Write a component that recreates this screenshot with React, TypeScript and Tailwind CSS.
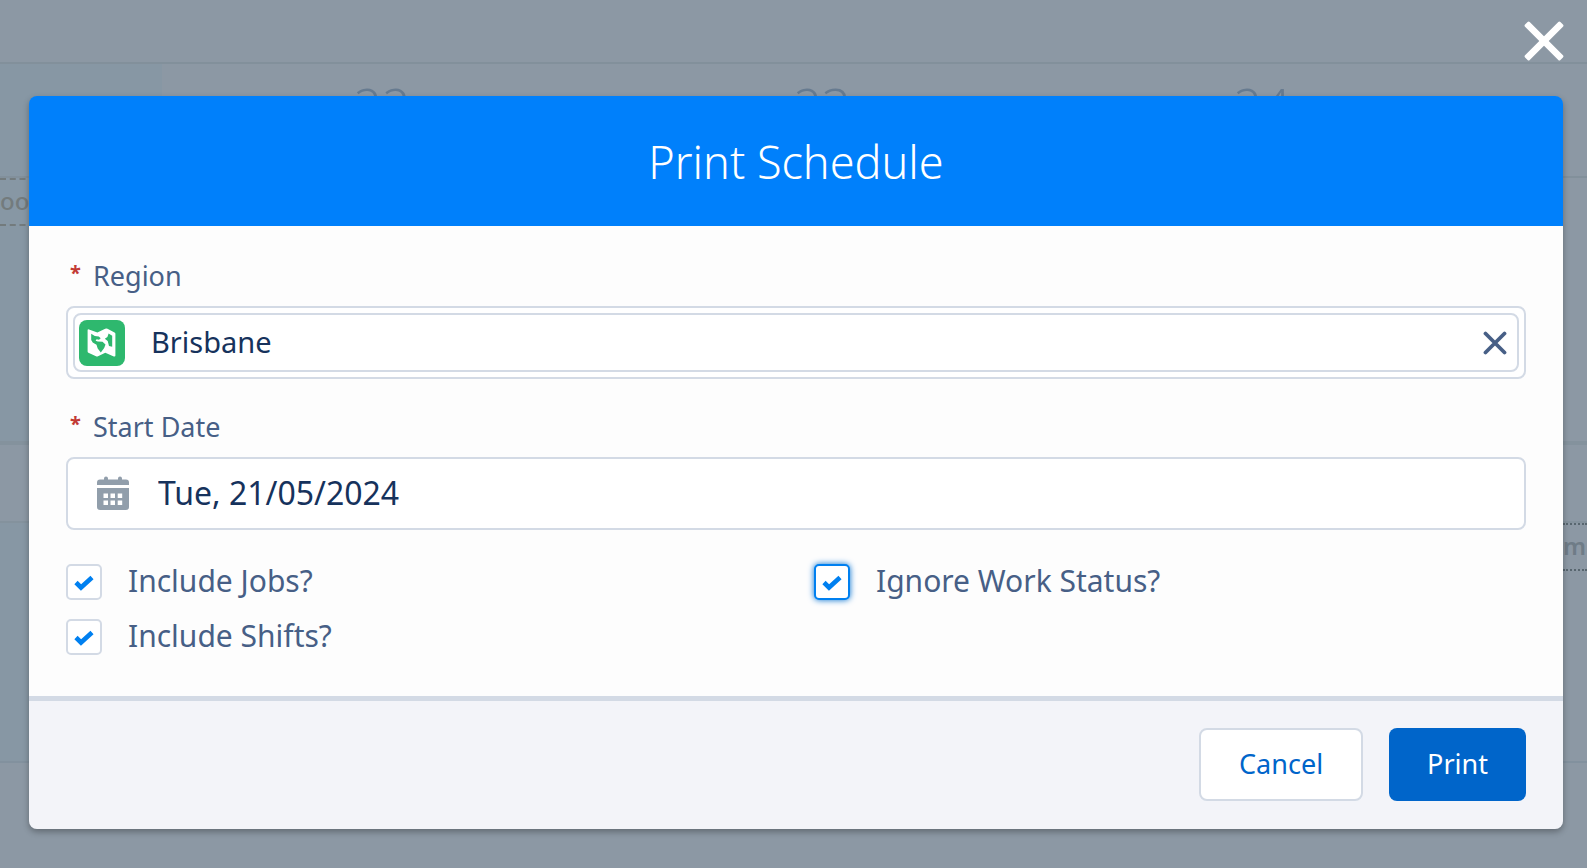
import { useState } from "react";

function CloseIcon() {
  return (
    <svg viewBox="0 0 40 40" className="size-10" fill="currentColor" aria-hidden="true">
      <rect x="-5" y="16.700" width="50" height="6.600" rx="1.5" transform="rotate(45 20 20)" />
      <rect x="-5" y="16.700" width="50" height="6.600" rx="1.5" transform="rotate(-45 20 20)" />
    </svg>
  );
}

function RemoveIcon() {
  return (
    <svg viewBox="0 0 24 24" className="size-6" fill="none" stroke="currentColor" strokeWidth="3.8" strokeLinecap="round" aria-hidden="true">
      <path d="M2.500 2.500L21.500 21.500M21.500 2.500L2.500 21.500" />
    </svg>
  );
}

function TerritoryIcon() {
  return (
    <svg viewBox="0 0 46 46" className="size-[46px] shrink-0 rounded-lg bg-[#2eb86e]" aria-hidden="true">
      <path
        d="M10 9.400Q8.600 8.800 8.600 10.200V31.500Q8.600 32.300 9.400 32.700L17 36.300Q18 36.800 19 36.300L26.300 32.800L34.800 36.400Q36.400 37 36.400 35.500V13.800Q36.400 12.900 35.500 12.400L28.500 8.800Q27.300 8.200 26.200 8.800L18.400 12.600Z"
        fill="#fff"
      />
      <path
        d="M12.200 13.800L15.800 16.100L19.800 16.400L21.700 18.200L20 19.700L17.600 19.300L16.600 20.800L18.800 21.500L23.500 21.800L26.500 24.500L25.200 28L21.800 32.400L18.700 28.600L17.500 24.800L13.700 22.600L12.200 20Z"
        fill="#2eb86e"
      />
      <path d="M29.600 13.400L33.200 15.800V26.800L30 25.900L28.700 21L25.800 18.800L28.400 17Z" fill="#2eb86e" />
    </svg>
  );
}

function CalendarIcon() {
  return (
    <svg viewBox="0 0 32 34" className="mb-[2px] h-[34px] w-8 shrink-0" fill="#919eab" aria-hidden="true">
      <path d="M7 2.500a2 2 0 0 1 4 0V3.500H21V2.500a2 2 0 0 1 4 0V3.500H29a3 3 0 0 1 3 3V9H0V6.500a3 3 0 0 1 3-3H7Z" />
      <path
        fillRule="evenodd"
        d="M0 12H32V31a3 3 0 0 1-3 3H3a3 3 0 0 1-3-3ZM6.500 17.500v4.500H11v-4.500ZM13.500 17.500v4.500H18v-4.500ZM20.700 17.500v4.500h4.500v-4.500ZM6.500 24.500V29H11v-4.500ZM13.500 24.500V29H18v-4.500ZM20.700 24.500V29h4.500v-4.500Z"
      />
    </svg>
  );
}

function FieldLabel({ htmlFor, text }: { htmlFor: string; text: string }) {
  return (
    <label htmlFor={htmlFor} className="flex pl-1 text-[27px] leading-9 text-[#475f86]">
      <span className="w-[23px] text-xl leading-[30px] font-bold text-[#c23934]" aria-hidden="true">
        *
      </span>
      {text}
    </label>
  );
}

function CheckField({ id, label, focused }: { id: string; label: string; focused?: boolean }) {
  return (
    <div className="flex items-start gap-[26px]">
      <span className="grid size-9 shrink-0 place-items-center">
        <input
          id={id}
          type="checkbox"
          defaultChecked
          autoFocus={focused}
          className="peer col-start-1 row-start-1 size-full appearance-none rounded-[5px] border-2 border-[#d3dae5] bg-white outline-none focus:border-[#0080f0] focus:shadow-[0_0_6px_#0070d2]"
        />
        <svg viewBox="0 0 20 16" className="pointer-events-none invisible col-start-1 row-start-1 mt-[2px] h-4 w-5 peer-checked:visible" fill="none" stroke="#0080f0" strokeWidth="4.6" aria-hidden="true">
          <path d="M2 7.500L7 12.500L18 2.500" />
        </svg>
      </span>
      <label htmlFor={id} className="text-[30px] leading-[34px] text-[#475f86]">
        {label}
      </label>
    </div>
  );
}

function ScheduleBackdrop() {
  return (
    <div className="col-start-1 row-start-1 flex min-w-0 flex-col overflow-hidden bg-[#8c98a4]" aria-hidden="true">
      <div className="h-[62px] shrink-0" />
      <div className="flex h-[116px] shrink-0 border-y-2 border-[#82909b]">
        <div className="w-[162px] shrink-0 bg-[#8797a4]" />
        {["22", "23", "24"].map((day) => (
          <div key={day} className="w-[440px] shrink-0 pt-[7px] text-center text-[50px] leading-[70px] font-light text-[#677b90]">
            {day}
          </div>
        ))}
      </div>
      <div className="flex h-[263px] shrink-0">
        <div className="w-[162px] bg-[#8797a4]">
          <div className="h-12 border-y-2 border-dashed border-[#737b7d] text-2xl leading-[42px] font-medium text-[#737b7d]">oo</div>
        </div>
      </div>
      <div className="h-[82px] shrink-0 border-y-4 border-b-2 border-[#84929d]" />
      <div className="flex h-60 shrink-0 border-b-2 border-[#82919e]">
        <div className="w-[162px] bg-[#8797a4]" />
        <div className="ml-auto w-6">
          <div className="h-12 border-y-2 border-dotted border-[#58666f] text-2xl leading-[42px] font-semibold text-[#6f7c87]">m</div>
        </div>
      </div>
    </div>
  );
}

export default function App() {
  const [region, setRegion] = useState("Brisbane");
  const [date, setDate] = useState("Tue, 21/05/2024");

  return (
    <div className="grid min-h-screen grid-cols-1 font-['Noto_Sans',sans-serif]">
      <ScheduleBackdrop />
      <div className="z-10 col-start-1 row-start-1 flex flex-col pr-6 pl-[29px]">
        <div className="flex h-24 shrink-0 items-start justify-end pt-[21px]">
          <button type="button" aria-label="Close" className="-mr-px text-white">
            <CloseIcon />
          </button>
        </div>
        <section role="dialog" aria-labelledby="print-title" className="rounded-lg shadow-[0_3px_6px_rgba(0,0,0,0.3)]">
          <header className="flex h-[130px] items-center justify-center rounded-t-lg bg-[#0080fb]">
            <h1 id="print-title" className="text-[45px] leading-none font-light text-white">
              Print Schedule
            </h1>
          </header>

          <div className="bg-[#fdfdfd] px-[37px] pt-8 pb-[41px]">
            <FieldLabel htmlFor="region" text="Region" />
            <div className="mt-3 h-[73px] rounded-lg border-2 border-[#d3dae5] bg-white p-[5px]">
              <div className="flex h-full items-center rounded-lg border-2 border-[#d3dae5] pr-[10px] pl-1">
                <TerritoryIcon />
                <input
                  id="region"
                  value={region}
                  onChange={(e) => setRegion(e.target.value)}
                  className="ml-[26px] min-w-0 flex-1 pb-[2px] text-[29px] leading-9 text-[#16325c] outline-none"
                />
                <button type="button" aria-label="Remove region" className="text-[#475f86]" onClick={() => setRegion("")}>
                  <RemoveIcon />
                </button>
              </div>
            </div>

            <div className="mt-[30px]">
              <FieldLabel htmlFor="start-date" text="Start Date" />
            </div>
            <div className="mt-3 flex h-[73px] items-center rounded-lg border-2 border-[#d3dae5] bg-white px-[29px]">
              <CalendarIcon />
              <input
                id="start-date"
                value={date}
                onChange={(e) => setDate(e.target.value)}
                className="ml-[29px] min-w-0 flex-1 pb-[2px] text-[32px] leading-9 text-[#16325c] outline-none"
              />
            </div>

            <div className="mt-[34px] grid grid-cols-2 gap-x-9 gap-y-[19px]">
              <CheckField id="include-jobs" label="Include Jobs?" />
              <CheckField id="ignore-status" label="Ignore Work Status?" focused />
              <CheckField id="include-shifts" label="Include Shifts?" />
            </div>
          </div>

          <footer className="flex justify-end gap-[26px] rounded-b-lg border-t-[5px] border-[#d3dae5] bg-[#f3f4f9] px-[37px] pt-[27px] pb-7">
            <button type="button" className="h-[73px] rounded-lg border-2 border-[#d3dae5] bg-white px-[38px] text-[27px] text-[#0065ca]">
              Cancel
            </button>
            <button type="button" className="h-[73px] rounded-lg bg-[#0065ca] px-[38px] text-[27px] text-white">
              Print
            </button>
          </footer>
        </section>
      </div>
    </div>
  );
}
